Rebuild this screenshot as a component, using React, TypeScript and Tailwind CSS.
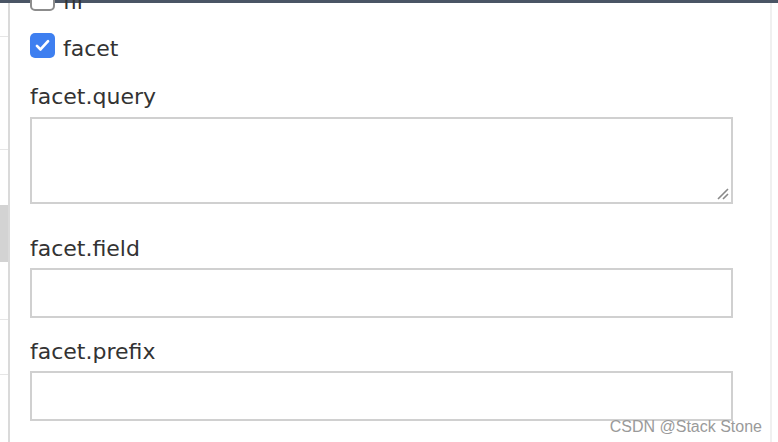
import React from 'react';

const font = { fontFamily: '"DejaVu Sans", "Noto Sans", sans-serif' };

const Box: React.FC<{ checked?: boolean }> = ({ checked }) =>
    checked ? (
        <span className="flex h-[25px] w-[25px] shrink-0 items-center justify-center rounded-[5px] bg-[#3e7ff0]">
            <svg viewBox="0 0 24 24" className="h-[19px] w-[19px]" fill="none" stroke="white" strokeWidth="3.4" strokeLinecap="round" strokeLinejoin="round">
                <path d="M5 12.5l4.5 4.5L19 6.5" />
            </svg>
        </span>
    ) : (
        <span className="block h-[25px] w-[25px] shrink-0 rounded-[5px] border-2 border-[#8c8c8c] bg-white" />
    );

const Field: React.FC<{ label: string; multi?: boolean; gap: string }> = ({ label, multi, gap }) => (
    <div className={gap}>
        <div className="h-[30px] leading-[30px] text-[22px] text-[#333]">{label}</div>
        {multi ? (
            <div className="relative mt-[5px] h-[87px] border-2 border-[#d0d0d0] bg-white">
                <svg viewBox="0 0 14 14" className="absolute bottom-[2px] right-[2px] h-[14px] w-[14px]" stroke="#8a8a8a" strokeWidth="1.6">
                    <path d="M3 13L13 3M8 13L13 8" />
                </svg>
            </div>
        ) : (
            <div className="mt-[4px] h-[50px] border-2 border-[#d0d0d0] bg-white" />
        )}
    </div>
);

export default function App() {
    return (
        <div className="relative h-[442px] w-[778px] overflow-hidden bg-white" style={font}>
            <div className="h-[3px] bg-[#4a5565]" />
            <div className="flex h-[439px]">
                {/* list rows behind the panel */}
                <div className="flex w-[10px] shrink-0 flex-col border-r-2 border-[#dadada]">
                    <div className="h-[34px] border-b border-[#e6e6e6]" />
                    <div className="h-[113px] border-b border-[#e6e6e6]" />
                    <div className="h-[55px]" />
                    <div className="h-[57px] bg-[#d3d3d3]" />
                    <div className="h-[58px] border-b border-[#e6e6e6]" />
                    <div className="h-[55px] border-b border-[#e6e6e6]" />
                </div>

                <div className="flex-1 pl-[20px] pr-[37px]">
                    <div className="-mt-[17px] flex h-[25px] items-center gap-[8px]">
                        <Box />
                        <span className="pt-[6px] text-[22px] leading-[25px] text-[#333]">fil</span>
                    </div>
                    <div className="mt-[22px] flex h-[25px] items-center gap-[8px]">
                        <Box checked />
                        <span className="pt-[6px] text-[22px] leading-[25px] text-[#333]">facet</span>
                    </div>
                    <Field label="facet.query" multi gap="mt-[24px]" />
                    <Field label="facet.field" gap="mt-[30px]" />
                    <Field label="facet.prefix" gap="mt-[19px]" />
                </div>

                <div className="w-[8px] shrink-0 border-l-2 border-[#f0f0f0]" />
            </div>

            <div className="absolute bottom-[6px] right-[16px] text-[16px] leading-[18px] text-[#9a9a9a]" style={{ fontFamily: '"Liberation Sans", Arial, sans-serif' }}>
                CSDN @Stack Stone
            </div>
        </div>
    );
}
